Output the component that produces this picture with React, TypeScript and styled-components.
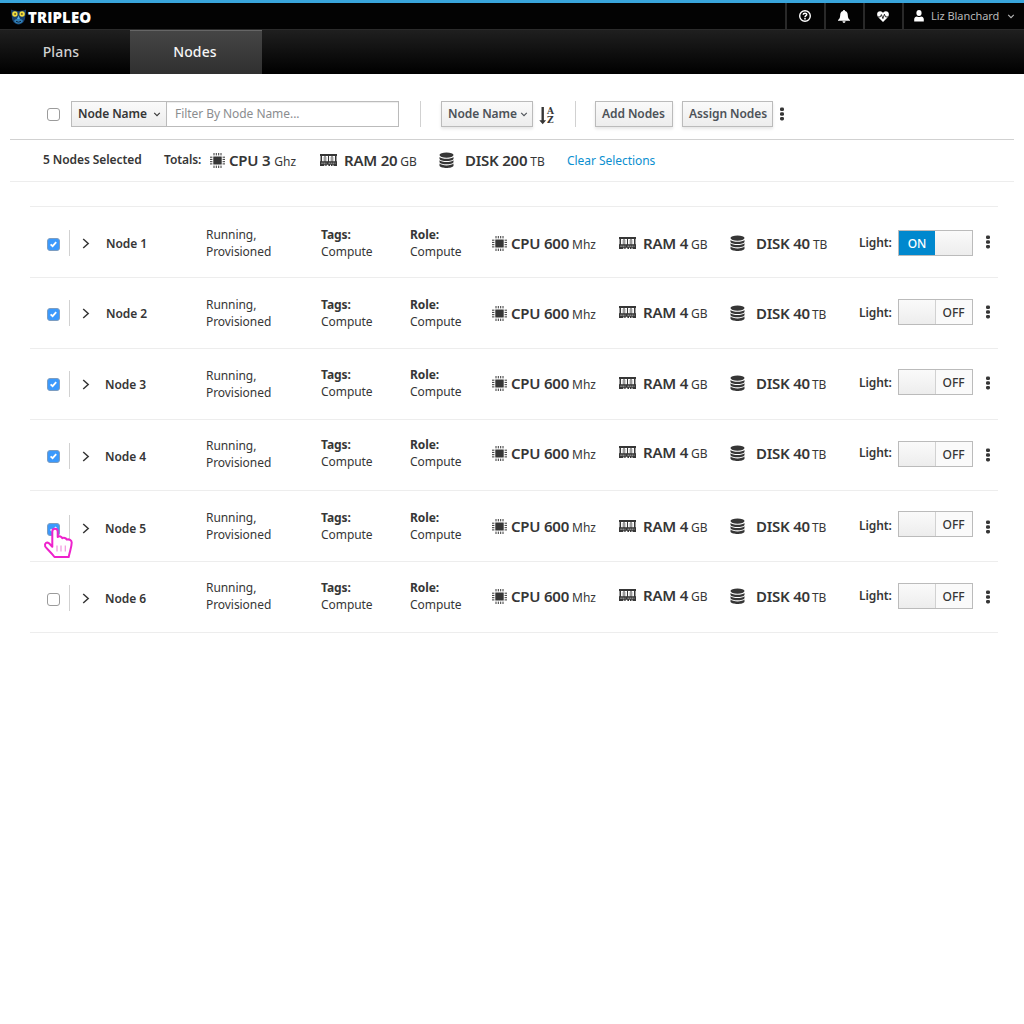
import React from "react";
import styled, { createGlobalStyle } from "styled-components";

const Global = createGlobalStyle`
  * { box-sizing: border-box; }
  body {
    margin: 0;
    background: #fff;
    color: #363636;
    font-family: "Noto Sans", "Open Sans", sans-serif;
    font-size: 12px;
    line-height: 17px;
  }
`;

const Page = styled.div`
  width: 1024px;
  height: 1024px;
  overflow: hidden;
  position: relative;
`;

const TopBar = styled.header`
  height: 30px;
  display: flex;
  justify-content: space-between;
  background: #030303;
  border-top: 3px solid #39a5dc;
  border-bottom: 1px solid #2b2b2b;
`;

const Brand = styled.div`
  display: flex;
  align-items: center;
  padding: 2px 0 0 11px;
  color: #fff;
  font: 800 15px/20px "Open Sans", sans-serif;
  letter-spacing: 0.1px;
  gap: 2px;
`;

const Utilities = styled.div`
  display: flex;
`;

const Utility = styled.div<{ $width: number }>`
  width: ${(p) => p.$width}px;
  border-left: 2px solid #292929;
  padding-right: 2px;
  display: flex;
  align-items: center;
  justify-content: center;
  color: #fff;
`;

const User = styled(Utility)`
  justify-content: flex-start;
  padding: 0 0 1px 10px;
  font-size: 11px;
  color: #b8b8b8;
  span { margin: 0 8px 0 7px; letter-spacing: -0.05px; }
`;

const Nav = styled.nav`
  height: 44px;
  display: flex;
  background: linear-gradient(#1f1f1f, #000);
`;

const Tab = styled.div<{ $active?: boolean; $width: number }>`
  width: ${(p) => p.$width}px;
  padding-right: ${(p) => (p.$active ? 2 : 8)}px;
  padding-bottom: 2px;
  display: flex;
  align-items: center;
  justify-content: center;
  font-size: 14px;
  font-weight: 500;
  letter-spacing: 0.15px;
  color: ${(p) => (p.$active ? "#f5f5f5" : "#d1d1d1")};
  background: ${(p) => (p.$active ? "linear-gradient(#454545, #303030)" : "none")};
  border-top: 1px solid ${(p) => (p.$active ? "#666" : "transparent")};
`;

const Toolbar = styled.div`
  margin: 0 10px;
  height: 66px;
  padding: 27px 0 0 37px;
  display: flex;
  align-items: flex-start;
  border-bottom: 1px solid #d1d1d1;
`;

const Check = styled.span<{ $on?: boolean }>`
  width: 13px;
  height: 13px;
  flex: none;
  display: flex;
  align-items: center;
  justify-content: center;
  border: 1px solid ${(p) => (p.$on ? "#7d9dc0" : "#9b9b9b")};
  border-radius: 3px;
  background: ${(p) => (p.$on ? "#3b99fc" : "#fff")};
`;

const ToolCheck = styled(Check)`
  margin: 7px 11px 0 0;
`;

const Button = styled.button<{ $width: number; $flat?: boolean; $gap?: number }>`
  width: ${(p) => p.$width}px;
  height: 26px;
  padding: 0 0 1px 6px;
  display: flex;
  align-items: center;
  gap: ${(p) => p.$gap ?? 7}px;
  border: 1px solid #bbb;
  border-radius: 0;
  background: linear-gradient(#fafafa, #ededed);
  box-shadow: ${(p) => (p.$flat ? "none" : "0 2px 3px rgba(3, 3, 3, 0.1)")};
  color: ${(p) => (p.$flat ? "#363636" : "#4d5258")};
  font: 600 12px/17px "Noto Sans", "Open Sans", sans-serif;
  letter-spacing: -0.08px;
  white-space: nowrap;
`;

const Actions = styled.div`
  display: flex;
  gap: 9px;
`;

const ToolMenu = styled.span`
  display: flex;
  margin: 6px 0 0 6px;
`;

const Filter = styled.div`
  width: 233px;
  height: 26px;
  margin-left: -1px;
  padding: 3px 8px;
  border: 1px solid #bbb;
  box-shadow: inset 0 1px 1px rgba(3, 3, 3, 0.075);
  color: #8b8d8f;
  letter-spacing: -0.06px;
`;

const Rule = styled.span<{ $before: number; $after: number }>`
  width: 1px;
  height: 26px;
  margin: 0 ${(p) => p.$after}px 0 ${(p) => p.$before}px;
  background: #d1d1d1;
`;

const SortIcon = styled.span`
  margin: 5px 0 0 6px;
  width: 16px;
  height: 20px;
  display: flex;
`;

const SortLetters = styled.span`
  margin-top: 1px;
  font: bold 9px/8.5px "DejaVu Serif", serif;
  width: 8px;
`;

const Summary = styled.div`
  margin: 0 10px;
  height: 42px;
  display: flex;
  align-items: flex-start;
  padding: 11px 0 0 33px;
  border-bottom: 1px solid #ededed;
`;

const Label = styled.span<{ $width?: number; $weight?: number; $shift?: number }>`
  width: ${(p) => (p.$width ? p.$width + "px" : "auto")};
  margin-left: ${(p) => p.$shift ?? 0}px;
  font-weight: ${(p) => p.$weight ?? 600};
  letter-spacing: -0.08px;
  white-space: nowrap;
`;

const Link = styled.a`
  margin-top: 1px;
  color: #0b8fd0;
  letter-spacing: -0.05px;
`;

const StatBox = styled.div<{ $width: number; $gap: number }>`
  width: ${(p) => p.$width}px;
  display: flex;
  align-items: center;
  height: 18px;
  gap: ${(p) => p.$gap}px;
`;

const StatText = styled.span<{ $gap: number }>`
  display: flex;
  align-items: baseline;
  gap: ${(p) => p.$gap}px;
  white-space: nowrap;
`;

const StatValue = styled.span`
  font-size: 15px;
  line-height: 18px;
  font-weight: 600;
  letter-spacing: -0.23px;
`;

const List = styled.main`
  margin: 24px 26px 0 30px;
  border-top: 1px solid #ededed;
`;

const Row = styled.section`
  height: 71px;
  display: grid;
  grid-template-columns: 22px 13px 24px 100px 115px 89px 82px 127px 111px 129px 39px 87px 20px;
  align-items: start;
  padding-left: 17px;
  width: 968px;
  border-bottom: 1px solid #ededed;
`;

const Cell = styled.div<{ $top: number }>`
  padding-top: ${(p) => p.$top}px;
  white-space: nowrap;
`;

const TextCell = styled(Cell)`
  letter-spacing: -0.06px;
`;

const Divider = styled.div`
  width: 1px;
  height: 26px;
  background: #d1d1d1;
`;

const Toggle = styled.div`
  width: 75px;
  height: 26px;
  display: flex;
  border: 1px solid #bbb;
  background: linear-gradient(#fafafa, #ededed);
`;

const ToggleState = styled.span<{ $on?: boolean }>`
  width: ${(p) => (p.$on ? 36 : 37)}px;
  margin-left: ${(p) => (p.$on ? 0 : 36)}px;
  padding-right: ${(p) => (p.$on ? 0 : 1)}px;
  height: 24px;
  line-height: 25px;
  text-align: center;
  font-weight: 500;
  letter-spacing: -0.1px;
  color: ${(p) => (p.$on ? "#fff" : "#363636")};
  background: ${(p) => (p.$on ? "#0088ce" : "#fafafa")};
  border-left: ${(p) => (p.$on ? "none" : "1px solid #d1d1d1")};
`;

const Pointer = styled.svg`
  position: absolute;
  left: 43px;
  top: 526px;
`;

const Tick = () => (
  <svg width="9" height="9" viewBox="0 0 9 9" fill="none">
    <path d="M1.6 4.4 3.6 6.2 7.2 2.2" stroke="#fff" strokeWidth="1.8" />
  </svg>
);

const Caret = ({ color = "#4d5258" }: { color?: string }) => (
  <svg width="8" height="6" viewBox="0 0 8 6" fill="none">
    <path d="M1.200 1.800 4 4.600 6.800 1.800" stroke={color} strokeWidth="1.100" />
  </svg>
);

const Kebab = () => (
  <svg width="6" height="14" viewBox="0 0 6 14" fill="#363636">
    <rect x="1" y="0.5" width="4" height="3.6" rx="1.4" />
    <rect x="1" y="5.2" width="4" height="3.6" rx="1.4" />
    <rect x="1" y="9.9" width="4" height="3.6" rx="1.4" />
  </svg>
);

const CpuIcon = () => (
  <svg width="15" height="15" viewBox="0 0 15 15">
    <rect x="3.300" y="3.500" width="8.400" height="8" fill="#363636" />
    <g stroke="#363636" strokeWidth="1" fill="none">
      <path d="M4 0v2.400M6.300 0v2.400M8.700 0v2.400M11 0v2.400M4 12.600V15M6.300 12.600V15M8.700 12.600V15M11 12.600V15" />
      <path d="M0 4.200h2.400M0 6.400h2.400M0 8.700h2.400M0 10.900h2.400M12.600 4.200H15M12.600 6.400H15M12.600 8.700H15M12.600 10.900H15" />
    </g>
  </svg>
);

const RamIcon = () => (
  <svg width="17" height="12" viewBox="0 0 17 12" fill="#363636">
    <path d="M0 0h17v2H0z" />
    <path d="M.5 2H2v6H.5zM4.500 2h1v6h-1zM8 2h1v6H8zM11.500 2h1v6h-1zM15 2h1.500v6H15z" />
    <path d="M2.900 3h.7v4h-.7zM6.400 3h.7v4h-.7zM9.900 3h.7v4h-.7zM13.400 3h.7v4h-.7z" opacity=".35" />
    <path d="M0 7.200h17V12H0z" />
    <path d="M1.300 9.200h5.200M8.500 9.200h7" stroke="#fff" strokeWidth=".6" strokeDasharray="1.6 .5" />
    <path d="M4.300 11.400h1M6.600 11.400h1.800M10 11.400h1M12.500 11.400h1" stroke="#fff" strokeWidth="1.200" />
  </svg>
);

const DiskIcon = () => (
  <svg width="15" height="17" viewBox="0 0 15 17" fill="#363636">
    <ellipse cx="7.500" cy="3.100" rx="7" ry="2.700" />
    <path d="M.5 4.900c2 2.400 12 2.400 14 0V7c-1 2.700-13 2.700-14 0z" />
    <path d="M.5 8.300c2 2.400 12 2.400 14 0v2c-1 2.700-13 2.700-14 0z" />
    <path d="M.5 11.600c2 2.400 12 2.400 14 0v2.100c-1 3-13 3-14 0z" />
  </svg>
);

const Chevron = () => (
  <svg width="8" height="12" viewBox="0 0 8 12" fill="none">
    <path d="M1.200 1 6.200 5.500 1.200 10" stroke="#363636" strokeWidth="1.500" />
  </svg>
);

const Owl = () => (
  <svg width="15" height="16" viewBox="0 0 15 16">
    <path d="M0 0.500C2 2 4 1.200 7.500 2.200 11 1.200 13 2 15 .5c.2 3-.4 5-.8 7 .3 4-2.500 8-6.700 8S.5 11.500.8 7.500C.3 5 0 3 0 .5z" fill="#173f6b" />
    <path d="M3 12c1.500-3 7.500-3 9 0-1.500 3.500-7.500 3.500-9 0z" fill="#2f80b8" />
    <circle cx="3.900" cy="5" r="2.700" fill="#f0dc3c" />
    <circle cx="11.100" cy="5" r="2.700" fill="#f0dc3c" />
    <circle cx="4.100" cy="5" r="1" fill="#6d6430" />
    <circle cx="10.900" cy="5" r="1" fill="#6d6430" />
    <path d="M7.500 6.500 9 10H6z" fill="#59b0df" />
    <path d="M5 12.300q2.500 1.800 5 0" stroke="#10243b" fill="none" />
  </svg>
);

const Help = () => (
  <svg width="12" height="12" viewBox="0 0 12 12" fill="none" stroke="#fff">
    <circle cx="6" cy="6" r="5.300" strokeWidth="1.400" />
    <path d="M4.200 4.800C4.300 2.700 7.800 2.800 7.700 4.700 7.600 5.800 6 5.700 6 7.200M6 8v1.400" strokeWidth="1.500" />
  </svg>
);

const Bell = () => (
  <svg width="12" height="13" viewBox="0 0 12 13" fill="#fff">
    <path d="M6 0c.7 0 1 .4 1 1 2 .5 2.700 2.200 2.800 4.200.1 2.600.8 3.800 2.200 4.800v.8H0V10c1.400-1 2.100-2.200 2.200-4.800C2.300 3.200 3 1.500 5 1c0-.6.300-1 1-1zM4.500 11.300h3C7.400 12.400 6.800 13 6 13s-1.400-.6-1.500-1.700z" />
  </svg>
);

const Heart = () => (
  <svg width="12" height="11" viewBox="0 0 12 11">
    <path d="M6 11 1 5.900C-.9 3.200.4.300 3.200.300 4.600.300 5.500 1.100 6 2 6.500 1.100 7.400.300 8.800.300c2.800 0 4.100 2.900 2.200 5.600z" fill="#fff" />
    <path d="M1 5.900h2.200l1.200-2.300 1.500 4 1.500-4.300 1.200 2.600H11" stroke="#030303" fill="none" strokeWidth=".8" />
  </svg>
);

const Person = () => (
  <svg width="10" height="12" viewBox="0 0 10 12" fill="#fff">
    <ellipse cx="5" cy="3" rx="2.600" ry="3" />
    <path d="M.2 11.500V9.200C.2 7.400 1.500 6.600 3 6.400c1 .8 3 .8 4 0 1.500.2 2.800 1 2.800 2.800v2.300z" />
  </svg>
);

type StatProps = {
  icon: React.ReactNode;
  name: string;
  unit: string;
  width: number;
  gap: number;
  unitGap?: number;
};

const Stat = ({ icon, name, unit, width, gap, unitGap = 3 }: StatProps) => (
  <StatBox $width={width} $gap={gap}>
    {icon}
    <StatText $gap={unitGap}>
      <StatValue>{name}</StatValue>
      <span>{unit}</span>
    </StatText>
  </StatBox>
);

type Node = {
  name: string;
  selected: boolean;
  light: boolean;
  check: number;
  divider: number;
  status: number;
  tags: number;
  stats: number;
  ram: number;
  label: number;
  toggle: number;
  shift?: number;
};

const nodes: Node[] = [
  { name: "Node 1", selected: true, light: true, check: 31, divider: 23, status: 19, tags: 19, stats: 27, ram: 27, label: 27, toggle: 23 },
  { name: "Node 2", selected: true, light: false, check: 30, divider: 22, status: 18, tags: 18, stats: 26, ram: 25, label: 26, toggle: 21 },
  { name: "Node 3", selected: true, light: false, check: 29, divider: 22, status: 18, tags: 17, stats: 25, ram: 25, label: 25, toggle: 20, shift: -1 },
  { name: "Node 4", selected: true, light: false, check: 30, divider: 23, status: 17, tags: 16, stats: 24, ram: 23, label: 24, toggle: 21, shift: -1 },
  { name: "Node 5", selected: true, light: false, check: 32, divider: 24, status: 18, tags: 18, stats: 26, ram: 26, label: 26, toggle: 20, shift: -1 },
  { name: "Node 6", selected: false, light: false, check: 31, divider: 23, status: 17, tags: 17, stats: 25, ram: 24, label: 25, toggle: 21, shift: -1 },
];

const NodeRow = ({ node }: { node: Node }) => (
  <Row>
    <Cell $top={node.check}>
      <Check $on={node.selected}>{node.selected && <Tick />}</Check>
    </Cell>
    <Cell $top={node.divider}><Divider /></Cell>
    <Cell $top={node.divider + 7}><Chevron /></Cell>
    <Cell $top={node.divider + 5}><Label $shift={node.shift}>{node.name}</Label></Cell>
    <TextCell $top={node.status}>Running,<br />Provisioned</TextCell>
    <TextCell $top={node.tags}><Label $weight={700}>Tags:</Label><br />Compute</TextCell>
    <TextCell $top={node.tags}><Label $weight={700}>Role:</Label><br />Compute</TextCell>
    <Cell $top={node.stats}><Stat icon={<CpuIcon />} name="CPU 600" unit="Mhz" width={127} gap={4} /></Cell>
    <Cell $top={node.ram}><Stat icon={<RamIcon />} name="RAM 4" unit="GB" width={111} gap={7} /></Cell>
    <Cell $top={node.stats}>
      <Stat icon={<DiskIcon />} name="DISK 40" unit="TB" width={129} gap={11} unitGap={node.light ? 3 : 2} />
    </Cell>
    <Cell $top={node.label}><Label>Light:</Label></Cell>
    <Cell $top={node.toggle}>
      <Toggle><ToggleState $on={node.light}>{node.light ? "ON" : "OFF"}</ToggleState></Toggle>
    </Cell>
    <Cell $top={node.divider + 5}><Kebab /></Cell>
  </Row>
);

export default function App() {
  return (
    <Page>
      <Global />
      <TopBar>
        <Brand><Owl />TRIPLEO</Brand>
        <Utilities>
          <Utility $width={39}><Help /></Utility>
          <Utility $width={39}><Bell /></Utility>
          <Utility $width={39}><Heart /></Utility>
          <User $width={122}><Person /><span>Liz Blanchard</span><Caret color="#b8b8b8" /></User>
        </Utilities>
      </TopBar>
      <Nav>
        <Tab $width={130}>Plans</Tab>
        <Tab $width={132} $active>Nodes</Tab>
      </Nav>
      <Toolbar>
        <ToolCheck />
        <Button $width={96} $flat $gap={6}>Node Name<Caret color="#363636" /></Button>
        <Filter>Filter By Node Name...</Filter>
        <Rule $before={21} $after={20} />
        <Button $width={92} $gap={3}>Node Name<Caret /></Button>
        <SortIcon>
          <svg width="8" height="20" viewBox="0 0 8 20" fill="#363636">
            <path d="M2.500 1h2.400v13.200H7.100L3.700 18.200.3 14.200h2.200z" />
          </svg>
          <SortLetters>A<br />Z</SortLetters>
        </SortIcon>
        <Rule $before={20} $after={19} />
        <Actions>
          <Button $width={78}>Add Nodes</Button>
          <Button $width={91}>Assign Nodes</Button>
        </Actions>
        <ToolMenu><Kebab /></ToolMenu>
      </Toolbar>
      <Summary>
        <Label $width={121}>5 Nodes Selected</Label>
        <Label $width={46}>Totals:</Label>
        <Stat icon={<CpuIcon />} name="CPU 3" unit="Ghz" width={110} gap={4} unitGap={4} />
        <Stat icon={<RamIcon />} name="RAM 20" unit="GB" width={119} gap={7} />
        <Stat icon={<DiskIcon />} name="DISK 200" unit="TB" width={128} gap={11} />
        <Link>Clear Selections</Link>
      </Summary>
      <List>
        {nodes.map((node) => <NodeRow key={node.name} node={node} />)}
      </List>
      <Pointer width="31" height="33" viewBox="0 0 31 33">
        <path
          d="M9.300 16.500V5.400C9.300 1.800 14.700 1.800 14.700 5.400V11c1.500-1.300 4.200-.6 4.600 1.200 1.500-.9 3.800-.3 4.500 1.400 2.300-.7 4.900.4 4.900 3-.1 5.400-2.200 9.400-3 14.400H11.500C8.500 26.700 4.500 23.500 2.200 20.500 1.200 17.200 3.800 15.700 6 17.300l3.300 3.500z"
          fill="#fff" stroke="#ee22cc" strokeWidth="2" strokeLinejoin="round"
        />
        <path d="M14 19.500v6M18 19.500v6M22.300 19.500v6" stroke="#f193de" strokeWidth="1.200" />
      </Pointer>
    </Page>
  );
}
